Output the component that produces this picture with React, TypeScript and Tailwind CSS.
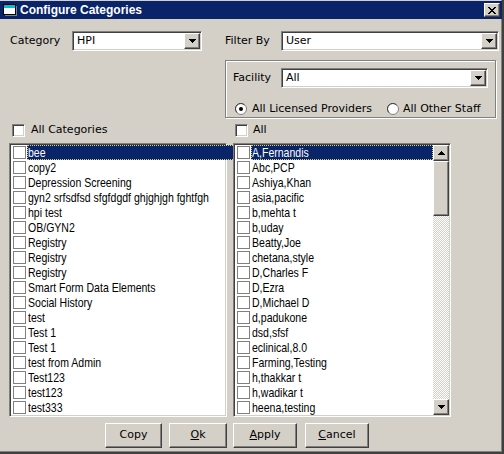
import React from "react";

const raised =
  "border border-t-white border-l-white border-b-[#404040] border-r-[#404040] shadow-[inset_-1px_-1px_#808080,inset_1px_1px_#d4d0c8] bg-[#d4d0c8]";
const sunken =
  "border border-t-[#808080] border-l-[#808080] border-b-white border-r-white shadow-[inset_1px_1px_#404040,inset_-1px_-1px_#d4d0c8]";
const dither =
  "bg-[repeating-conic-gradient(#ffffff_0_25%,#d4d0c8_0_50%)] bg-[length:2px_2px]";

function Arrow({ up }: { up?: boolean }) {
  return (
    <svg width="7" height="4" viewBox="0 0 7 4" shapeRendering="crispEdges">
      {up ? (
        <path d="M3 0h1v1h1v1h1v1h1v1H0V3h1V2h1V1h1z" fill="#000" />
      ) : (
        <path d="M0 0h7v1H6v1H5v1H4v1H3V3H2V2H1V1H0z" fill="#000" />
      )}
    </svg>
  );
}

function Combo({ value, w }: { value: string; w: string }) {
  return (
    <div className={`${sunken} ${w} h-[20px] bg-white flex items-center p-[1px]`}>
      <span className="flex-1 pl-[3px] text-[11px] text-black">{value}</span>
      <div className={`${raised} w-[16px] h-[16px] flex items-center justify-center`}>
        <Arrow />
      </div>
    </div>
  );
}

function Check() {
  return <div className={`${sunken} w-[13px] h-[13px] bg-white shrink-0`} />;
}

function Radio({ on }: { on?: boolean }) {
  return (
    <svg width="12" height="12" viewBox="0 0 12 12" className="shrink-0">
      <circle cx="6" cy="6" r="5.5" fill="#fff" stroke="#808080" />
      <path d="M2 9.5A5 5 0 0 1 9.5 2" fill="none" stroke="#404040" />
      {on && <circle cx="6" cy="6" r="2" fill="#000" />}
    </svg>
  );
}

function ListBox({ items, thumb }: { items: string[]; thumb: string }) {
  return (
    <div className={`${sunken} w-[218px] h-[274px] bg-white flex p-[1px]`}>
      <div className="flex-1 flex flex-col font-['Liberation_Sans',sans-serif] text-[13px] leading-[15px]">
        {items.map((t, i) => (
          <div key={i} className="h-[15px] flex items-center">
            <div className="w-[13px] h-[13px] ml-[2px] border border-[#808080] bg-white shrink-0" />
            <div
              className={`flex-1 h-[15px] ml-[1px] pl-[1px] whitespace-nowrap overflow-hidden ${
                i === 0
                  ? "bg-[#0a246a] text-white outline-1 outline-dotted outline-[#d4d080] -outline-offset-1"
                  : "text-black"
              }`}
            >
              <span className="inline-block origin-left scale-x-[0.81]">{t}</span>
            </div>
          </div>
        ))}
      </div>
      <div className="w-[16px] flex flex-col">
        <div className={`${raised} h-[16px] flex items-center justify-center`}>
          <Arrow up />
        </div>
        <div className={`${raised} ${thumb}`} />
        <div className={`flex-1 ${dither}`} />
        <div className={`${raised} h-[16px] flex items-center justify-center`}>
          <Arrow />
        </div>
      </div>
    </div>
  );
}

function Btn({ children, w, cls }: { children: React.ReactNode; w: string; cls: string }) {
  return (
    <div className={`${raised} ${w} ${cls} h-[25px] flex items-center justify-center text-[11px] text-black`}>
      {children}
    </div>
  );
}

const left = [
  "bee",
  "copy2",
  "Depression Screening",
  "gyn2 srfsdfsd sfgfdgdf ghjghjgh fghtfgh",
  "hpi test",
  "OB/GYN2",
  "Registry",
  "Registry",
  "Registry",
  "Smart Form Data Elements",
  "Social History",
  "test",
  "Test 1",
  "Test 1",
  "test from Admin",
  "Test123",
  "test123",
  "test333",
];

const right = [
  "A,Fernandis",
  "Abc,PCP",
  "Ashiya,Khan",
  "asia,pacific",
  "b,mehta t",
  "b,uday",
  "Beatty,Joe",
  "chetana,style",
  "D,Charles F",
  "D,Ezra",
  "D,Michael D",
  "d,padukone",
  "dsd,sfsf",
  "eclinical,8.0",
  "Farming,Testing",
  "h,thakkar t",
  "h,wadikar t",
  "heena,testing",
];

export default function App() {
  return (
    <div className="w-[504px] h-[454px] bg-[#d4d0c8] flex flex-col pt-[1px] border-r-2 border-b-2 border-r-[#404040] border-b-[#404040] shadow-[inset_-1px_-1px_#808080] font-['DejaVu_Sans',sans-serif] overflow-hidden">
      {/* title bar */}
      <div className="h-[18px] bg-[#0a246a] flex items-center pl-[3px] pr-[2px]">
        <svg width="14" height="12" viewBox="0 0 14 12" shapeRendering="crispEdges">
          <rect x="0.5" y="0.5" width="12" height="10" fill="#fff" stroke="#000" />
          <rect x="1" y="1" width="11" height="3" fill="#00c0e0" />
          <rect x="13" y="2" width="1" height="10" fill="#808080" />
          <rect x="2" y="11" width="12" height="1" fill="#808080" />
        </svg>
        <span className="ml-[3px] text-white font-bold text-[12px] font-['Liberation_Sans',sans-serif] leading-none">
          Configure Categories
        </span>
        <div className={`${raised} ml-auto w-[16px] h-[14px] flex items-center justify-center`}>
          <svg width="8" height="7" viewBox="0 0 8 7" shapeRendering="crispEdges">
            <path
              d="M0 0h2v1h1v1h2V1h1V0h2v1H7v1H6v1H5v1h1v1h1v1h1v1H6V6H5V5H3v1H2v1H0V6h1V5h1V4h1V3H2V2H1V1H0z"
              fill="#000"
            />
          </svg>
        </div>
      </div>

      {/* category / filter row */}
      <div className="mt-[12px] h-[20px] flex items-center text-[11px] text-black">
        <span className="ml-[10px] w-[62px]">Category</span>
        <Combo value="HPI" w="w-[130px]" />
        <span className="ml-[23px] w-[56px]">Filter By</span>
        <Combo value="User" w="w-[218px]" />
      </div>

      {/* facility group */}
      <div className="mt-[9px] ml-[225px] w-[271px] h-[58px] border border-[#808080] shadow-[1px_1px_#fff,inset_1px_1px_#fff] flex flex-col text-[11px] text-black">
        <div className="mt-[7px] h-[20px] flex items-center">
          <span className="ml-[7px] w-[48px]">Facility</span>
          <Combo value="All" w="w-[207px]" />
        </div>
        <div className="mt-[15px] h-[12px] flex items-center">
          <div className="ml-[9px] w-[152px] flex items-center">
            <Radio on />
            <span className="ml-[5px]">All Licensed Providers</span>
          </div>
          <Radio />
          <span className="ml-[4px]">All Other Staff</span>
        </div>
      </div>

      {/* select-all row */}
      <div className="mt-[6px] h-[13px] flex items-center text-[11px] text-black">
        <div className="ml-[12px] w-[223px] flex items-center">
          <Check />
          <span className="ml-[6px]">All Categories</span>
        </div>
        <Check />
        <span className="ml-[5px]">All</span>
      </div>

      {/* lists */}
      <div className="mt-[6px] flex">
        <div className="ml-[9px]">
          <ListBox items={left} thumb="h-[73px]" />
        </div>
        <div className="ml-[6px]">
          <ListBox items={right} thumb="h-[55px]" />
        </div>
      </div>

      {/* buttons */}
      <div className="mt-[6px] flex">
        <Btn w="w-[57px]" cls="ml-[105px]">Copy</Btn>
        <Btn w="w-[58px]" cls="ml-[7px]">
          <span className="underline">O</span>k
        </Btn>
        <Btn w="w-[64px]" cls="ml-[6px]">
          <span className="underline">A</span>pply
        </Btn>
        <Btn w="w-[64px]" cls="ml-[8px]">
          <span className="underline">C</span>ancel
        </Btn>
      </div>
    </div>
  );
}
